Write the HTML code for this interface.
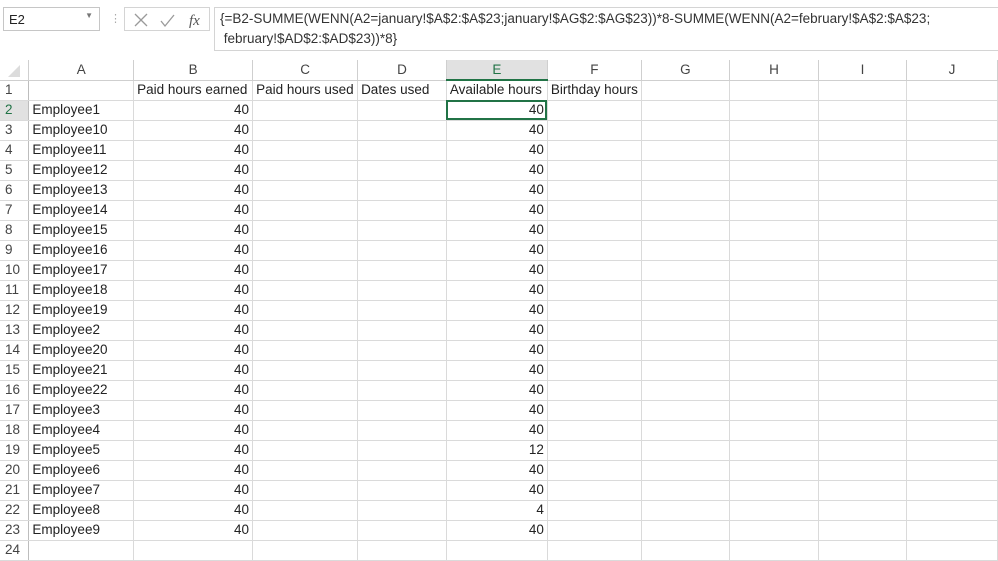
<!DOCTYPE html>
<html><head><meta charset="utf-8"><style>
*{margin:0;padding:0;box-sizing:border-box}
body{width:998px;height:559px;overflow:hidden;background:#fff;font-family:"Liberation Sans",sans-serif;color:#222;position:relative}
.nb{position:absolute;left:3px;top:7px;width:97px;height:24px;border:1px solid #c6c6c6;font-size:13px;padding:4px 5px}
.nb span{position:absolute;right:6px;top:3px;font-size:8px;color:#777}
.dots{position:absolute;left:110px;top:12px;color:#aaa;font-size:11px}
.ib{position:absolute;left:124px;top:7px;width:86px;height:24px;border:1px solid #d4d4d4}
.fb{position:absolute;left:214px;top:7px;width:790px;height:44px;border:1px solid #d4d4d4;font-size:13.5px;line-height:20px;padding:1px 5px;color:#333}
table{position:absolute;left:0;top:60px;border-collapse:collapse;table-layout:fixed}
td{height:20px;border-right:1px solid #dadada;border-bottom:1px solid #dadada;font-size:13.5px;padding:0 3px;white-space:nowrap;overflow:visible;line-height:18px}
tr.h td{background:#fff;color:#444;text-align:center;border-color:#cfcfcf}
td.r{color:#444;text-align:left;padding-left:5px;border-right:1px solid #bdbdbd}
td.n{text-align:right}
</style></head><body>
<div class="nb">E2<span>▼</span></div>
<div class="dots">⋮</div>
<div class="ib"><svg width="86" height="24"><path d="M10 6l12 12M22 6L10 18" stroke="#9a9a9a" stroke-width="1.3" fill="none"/><path d="M36 13l4 5 9-11" stroke="#9a9a9a" stroke-width="1.3" fill="none"/><text x="64" y="17" font-family="Liberation Serif" font-style="italic" font-size="15" fill="#555">fx</text></svg></div>
<div class="fb">{=B2-SUMME(WENN(A2=january!$A$2:$A$23;january!$AG$2:$AG$23))*8-SUMME(WENN(A2=february!$A$2:$A$23;<br>&nbsp;february!$AD$2:$AD$23))*8}</div>
<table>
<colgroup><col style="width:29px"><col style="width:105px"><col style="width:119px"><col style="width:105px"><col style="width:89px"><col style="width:101px"><col style="width:90px"><col style="width:89px"><col style="width:90px"><col style="width:89px"><col style="width:92px"></colgroup>
<tr class="h"><td style="background:#fff;padding:0"><svg width="20" height="16" style="display:block"><path d="M20 3L20 15 8 15Z" fill="#dcdcdc"/></svg></td><td>A</td><td>B</td><td>C</td><td>D</td><td style="background:#e1e1e1;border-bottom:2px solid #217346;color:#217346">E</td><td>F</td><td>G</td><td>H</td><td>I</td><td>J</td></tr>
<tr><td class="r">1</td><td></td><td>Paid hours earned</td><td>Paid hours used</td><td>Dates used</td><td>Available hours</td><td>Birthday hours</td><td></td><td></td><td></td><td></td></tr>
<tr><td class="r" style="background:#e1e1e1;color:#217346">2</td><td>Employee1</td><td class="n">40</td><td></td><td></td><td class="n" style="outline:2px solid #217346;outline-offset:-2px">40</td><td></td><td></td><td></td><td></td><td></td></tr>
<tr><td class="r">3</td><td>Employee10</td><td class="n">40</td><td></td><td></td><td class="n">40</td><td></td><td></td><td></td><td></td><td></td></tr>
<tr><td class="r">4</td><td>Employee11</td><td class="n">40</td><td></td><td></td><td class="n">40</td><td></td><td></td><td></td><td></td><td></td></tr>
<tr><td class="r">5</td><td>Employee12</td><td class="n">40</td><td></td><td></td><td class="n">40</td><td></td><td></td><td></td><td></td><td></td></tr>
<tr><td class="r">6</td><td>Employee13</td><td class="n">40</td><td></td><td></td><td class="n">40</td><td></td><td></td><td></td><td></td><td></td></tr>
<tr><td class="r">7</td><td>Employee14</td><td class="n">40</td><td></td><td></td><td class="n">40</td><td></td><td></td><td></td><td></td><td></td></tr>
<tr><td class="r">8</td><td>Employee15</td><td class="n">40</td><td></td><td></td><td class="n">40</td><td></td><td></td><td></td><td></td><td></td></tr>
<tr><td class="r">9</td><td>Employee16</td><td class="n">40</td><td></td><td></td><td class="n">40</td><td></td><td></td><td></td><td></td><td></td></tr>
<tr><td class="r">10</td><td>Employee17</td><td class="n">40</td><td></td><td></td><td class="n">40</td><td></td><td></td><td></td><td></td><td></td></tr>
<tr><td class="r">11</td><td>Employee18</td><td class="n">40</td><td></td><td></td><td class="n">40</td><td></td><td></td><td></td><td></td><td></td></tr>
<tr><td class="r">12</td><td>Employee19</td><td class="n">40</td><td></td><td></td><td class="n">40</td><td></td><td></td><td></td><td></td><td></td></tr>
<tr><td class="r">13</td><td>Employee2</td><td class="n">40</td><td></td><td></td><td class="n">40</td><td></td><td></td><td></td><td></td><td></td></tr>
<tr><td class="r">14</td><td>Employee20</td><td class="n">40</td><td></td><td></td><td class="n">40</td><td></td><td></td><td></td><td></td><td></td></tr>
<tr><td class="r">15</td><td>Employee21</td><td class="n">40</td><td></td><td></td><td class="n">40</td><td></td><td></td><td></td><td></td><td></td></tr>
<tr><td class="r">16</td><td>Employee22</td><td class="n">40</td><td></td><td></td><td class="n">40</td><td></td><td></td><td></td><td></td><td></td></tr>
<tr><td class="r">17</td><td>Employee3</td><td class="n">40</td><td></td><td></td><td class="n">40</td><td></td><td></td><td></td><td></td><td></td></tr>
<tr><td class="r">18</td><td>Employee4</td><td class="n">40</td><td></td><td></td><td class="n">40</td><td></td><td></td><td></td><td></td><td></td></tr>
<tr><td class="r">19</td><td>Employee5</td><td class="n">40</td><td></td><td></td><td class="n">12</td><td></td><td></td><td></td><td></td><td></td></tr>
<tr><td class="r">20</td><td>Employee6</td><td class="n">40</td><td></td><td></td><td class="n">40</td><td></td><td></td><td></td><td></td><td></td></tr>
<tr><td class="r">21</td><td>Employee7</td><td class="n">40</td><td></td><td></td><td class="n">40</td><td></td><td></td><td></td><td></td><td></td></tr>
<tr><td class="r">22</td><td>Employee8</td><td class="n">40</td><td></td><td></td><td class="n">4</td><td></td><td></td><td></td><td></td><td></td></tr>
<tr><td class="r">23</td><td>Employee9</td><td class="n">40</td><td></td><td></td><td class="n">40</td><td></td><td></td><td></td><td></td><td></td></tr>
<tr><td class="r">24</td><td></td><td></td><td></td><td></td><td></td><td></td><td></td><td></td><td></td><td></td></tr>
</table>
</body></html>
